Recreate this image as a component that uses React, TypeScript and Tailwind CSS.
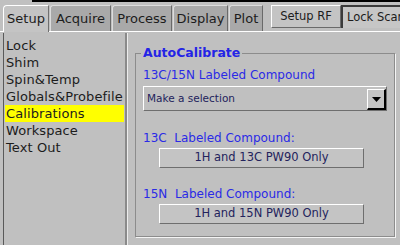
const tabs = [
  { label: "Setup", w: "w-[46px]", active: true },
  { label: "Acquire", w: "w-[61px]" },
  { label: "Process", w: "w-[60px]" },
  { label: "Display", w: "w-[55px]" },
  { label: "Plot", w: "w-[34px]" },
];

const items = ["Lock", "Shim", "Spin&Temp", "Globals&Probefile", "Calibrations", "Workspace", "Text Out"];

const PanelButton = ({ label }: { label: string }) => (
  <div className="ml-[16px] mt-[2px] h-[20px] w-[205px] flex items-center justify-center bg-[#c4c4c4] border border-t-white border-l-white border-r-[#6e6e6e] border-b-[#6e6e6e] text-[11.5px] text-[#23235c]">
    {label}
  </div>
);

export default function App() {
  return (
    <div className="w-[400px] h-[245px] overflow-hidden bg-[#c0c0c0] font-['DejaVu_Sans',sans-serif] text-[13px] text-[#1c1c1c] flex flex-col">
      {/* top strip */}
      <div className="h-[2px] shrink-0 flex">
        <div className="w-[32px]" />
        <div className="flex-1 bg-black" />
      </div>

      {/* tabs + toolbar buttons */}
      <div className="h-[29px] shrink-0 flex items-end pl-[3px]">
        <div className="flex items-end gap-[1px]">
          {tabs.map((t) =>
            t.active ? (
              <div
                key={t.label}
                className={`${t.w} relative z-10 h-[27px] -mb-[1px] pb-[1px] flex items-center justify-center bg-[#c4c4c4] border-t border-l border-white border-r border-r-[#707070] rounded-tl-[4px]`}
              >
                {t.label}
              </div>
            ) : (
              <div
                key={t.label}
                className={`${t.w} h-[26px] flex items-center justify-center bg-[#a9a9a9] border-t border-l border-[#dcdcdc] border-r border-r-[#6a6a6a] rounded-tl-[3px]`}
              >
                {t.label}
              </div>
            )
          )}
        </div>
        <div className="ml-[8px] mb-[3px] flex h-[23px] text-[11.5px]">
          <div className="w-[70px] flex items-center justify-center bg-[#c4c4c4] border border-t-white border-l-white border-r-[#6a6a6a] border-b-[#6a6a6a]">
            Setup RF
          </div>
          <div className="w-[62px] pl-[4px] flex items-center whitespace-nowrap bg-[#c6c6c6] border-t-2 border-l-2 border-[#3a3a3a]">
            Lock Scan
          </div>
        </div>
      </div>

      {/* tab panel */}
      <div className="flex-1 flex border-t border-white">
        {/* left list */}
        <div className="ml-[3px] mt-[1px] w-[124px] shrink-0 border-l border-[#5a5a5a] border-r-2 border-r-[#8a8a8a] px-[1px] pt-[4px] shadow-[1px_0_0_#ececec]">
          {items.map((it) => (
            <div
              key={it}
              className={`h-[17px] leading-[17px] pl-[1px] whitespace-nowrap tracking-[0.1px] ${it === "Calibrations" ? "bg-[#ffff00]" : ""}`}
            >
              {it}
            </div>
          ))}
        </div>

        {/* right panel */}
        <div className="flex-1 pl-[8px] pt-[13px] pr-[5px]">
          <fieldset className="h-[192px] border border-[#8c8c8c] shadow-[1px_1px_0_#f4f4f4] px-[7px]">
            <legend className="-ml-[2px] px-[2px] text-[12.5px] leading-[16px] font-bold text-[#2424e6]">
              AutoCalibrate
            </legend>
            <div className="mt-[6px] h-[16px] leading-[16px] text-[12px] text-[#2a2ae6]">13C/15N Labeled Compound</div>
            <div className="mt-[3px] h-[25px] w-[244px] flex items-center pl-[3px] border border-t-white border-l-white border-r-[#6e6e6e] border-b-[#6e6e6e] text-[10.5px] text-[#23235c]">
              Make a selection
              <div className="ml-auto self-end w-[19px] h-[21px] flex items-center justify-center bg-[#c4c4c4] border-t border-l border-white border-r-2 border-b-2 border-r-black border-b-black">
                <svg width="9" height="5" viewBox="0 0 9 5">
                  <path d="M0 0h9L4.5 5z" fill="#000" />
                </svg>
              </div>
            </div>
            <div className="mt-[19px] h-[16px] leading-[16px] text-[12px] text-[#2a2ae6] whitespace-pre">13C  Labeled Compound:</div>
            <PanelButton label="1H and 13C PW90 Only" />
            <div className="mt-[18px] h-[16px] leading-[16px] text-[12px] text-[#2a2ae6] whitespace-pre">15N  Labeled Compound:</div>
            <PanelButton label="1H and 15N PW90 Only" />
          </fieldset>
        </div>
      </div>
    </div>
  );
}
